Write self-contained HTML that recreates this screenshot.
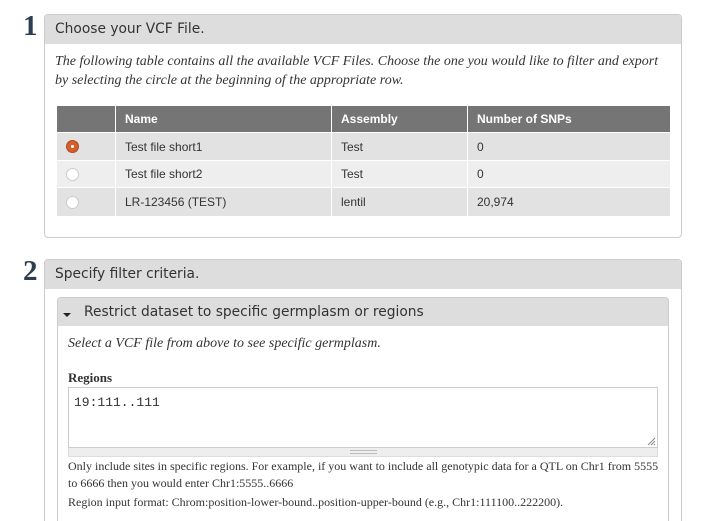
<!DOCTYPE html>
<html style="height:521px;overflow:hidden"><head><meta charset="utf-8"><style>
*{margin:0;padding:0;box-sizing:border-box}
body{width:710px;height:521px;background:#fff;position:relative;overflow:hidden;font-family:"Liberation Sans",sans-serif}
.abs{position:absolute}
.num{font-family:"Liberation Serif",serif;font-weight:bold;font-size:29px;color:#2e3d4f;line-height:1}
.panel{border:1px solid #ccc;border-radius:4px;background:#fff;overflow:hidden}
.ph{background:#ddd;height:29px;font-family:"DejaVu Sans",sans-serif;font-size:13.8px;color:#333;padding:6px 0 0 10px}
.it{font-family:"Liberation Serif",serif;font-style:italic;font-size:14px;color:#333;line-height:19px}
table{border-collapse:collapse;font-size:12px;color:#333}
td,th{border:1px solid #fff;padding:0 0 0 9px;text-align:left}
th{background:#757575;color:#fff;font-weight:bold;height:27px}
.rd{width:13px;height:13px;border-radius:50%;border:1px solid #ccc;background:#fff;margin-left:0}
.sel{background:#d35f2d;border-color:#b24a20;position:relative}
.sel:after{content:"";position:absolute;left:4px;top:4px;width:3px;height:3px;background:#fff;border-radius:50%}
.help{font-family:"Liberation Serif",serif;font-size:12px;color:#333}
</style></head><body>
<div class="abs num" style="left:23px;top:12px">1</div>
<div class="abs panel" style="left:44px;top:14px;width:638px;height:224px">
 <div class="ph">Choose your VCF File.</div>
 <div class="it" style="padding:8px 0 0 10px;width:625px">The following table contains all the available VCF Files. Choose the one you would like to filter and export by selecting the circle at the beginning of the appropriate row.</div>
</div>
<table class="abs" style="left:56px;top:105px;width:615px">
<tr><th style="width:59px"></th><th style="width:216px">Name</th><th style="width:136px">Assembly</th><th>Number of SNPs</th></tr>
<tr style="background:#e2e2e2;height:28px"><td><div class="rd sel"></div></td><td>Test file short1</td><td>Test</td><td>0</td></tr>
<tr style="background:#eee;height:27px"><td><div class="rd"></div></td><td>Test file short2</td><td>Test</td><td>0</td></tr>
<tr style="background:#e2e2e2;height:29px"><td><div class="rd"></div></td><td>LR-123456 (TEST)</td><td>lentil</td><td>20,974</td></tr>
</table>

<div class="abs num" style="left:23px;top:257px">2</div>
<div class="abs panel" style="left:44px;top:259px;width:638px;height:262px;border-bottom:none;border-radius:4px 4px 0 0">
 <div class="ph">Specify filter criteria.</div>
</div>
<div class="abs panel" style="left:57px;top:297px;width:612px;height:224px;border-bottom:none;border-radius:4px 4px 0 0">
 <div class="ph" style="height:28px;padding-left:26px">Restrict dataset to specific germplasm or regions</div>
</div>
<div class="abs" style="left:63px;top:313px;width:0;height:0;border-left:4px solid transparent;border-right:4px solid transparent;border-top:4px solid #222"></div>
<div class="abs it" style="left:68px;top:334px">Select a VCF file from above to see specific germplasm.</div>
<div class="abs" style="left:68px;top:370px;font-family:'Liberation Serif',serif;font-weight:bold;font-size:13px;color:#333">Regions</div>
<div class="abs" style="left:68px;top:387px;width:590px;height:61px;border:1px solid #ccc;background:#fff;font-family:'Liberation Mono',monospace;font-size:13px;color:#333;padding:7px 0 0 5px">19:111..111
 <svg class="abs" style="right:1px;bottom:1px" width="10" height="10"><path d="M9 2L2 9M9 5L5 9M9 8L8 9" stroke="#888" stroke-width="1"/></svg>
</div>
<div class="abs" style="left:68px;top:448px;width:590px;height:9px;background:#eee;border:1px solid #ddd;border-top:none"><div style="margin:2px auto 0;width:27px;height:4px;border-top:1px solid #bbb;border-bottom:1px solid #bbb"></div></div>
<div class="abs help" style="left:68px;top:458px;width:595px;line-height:17px">Only include sites in specific regions. For example, if you want to include all genotypic data for a QTL on Chr1 from 5555 to 6666 then you would enter Chr1:5555..6666</div>
<div class="abs help" style="left:68px;top:495px">Region input format: Chrom:position-lower-bound..position-upper-bound (e.g., Chr1:111100..222200).</div>
</body></html>
